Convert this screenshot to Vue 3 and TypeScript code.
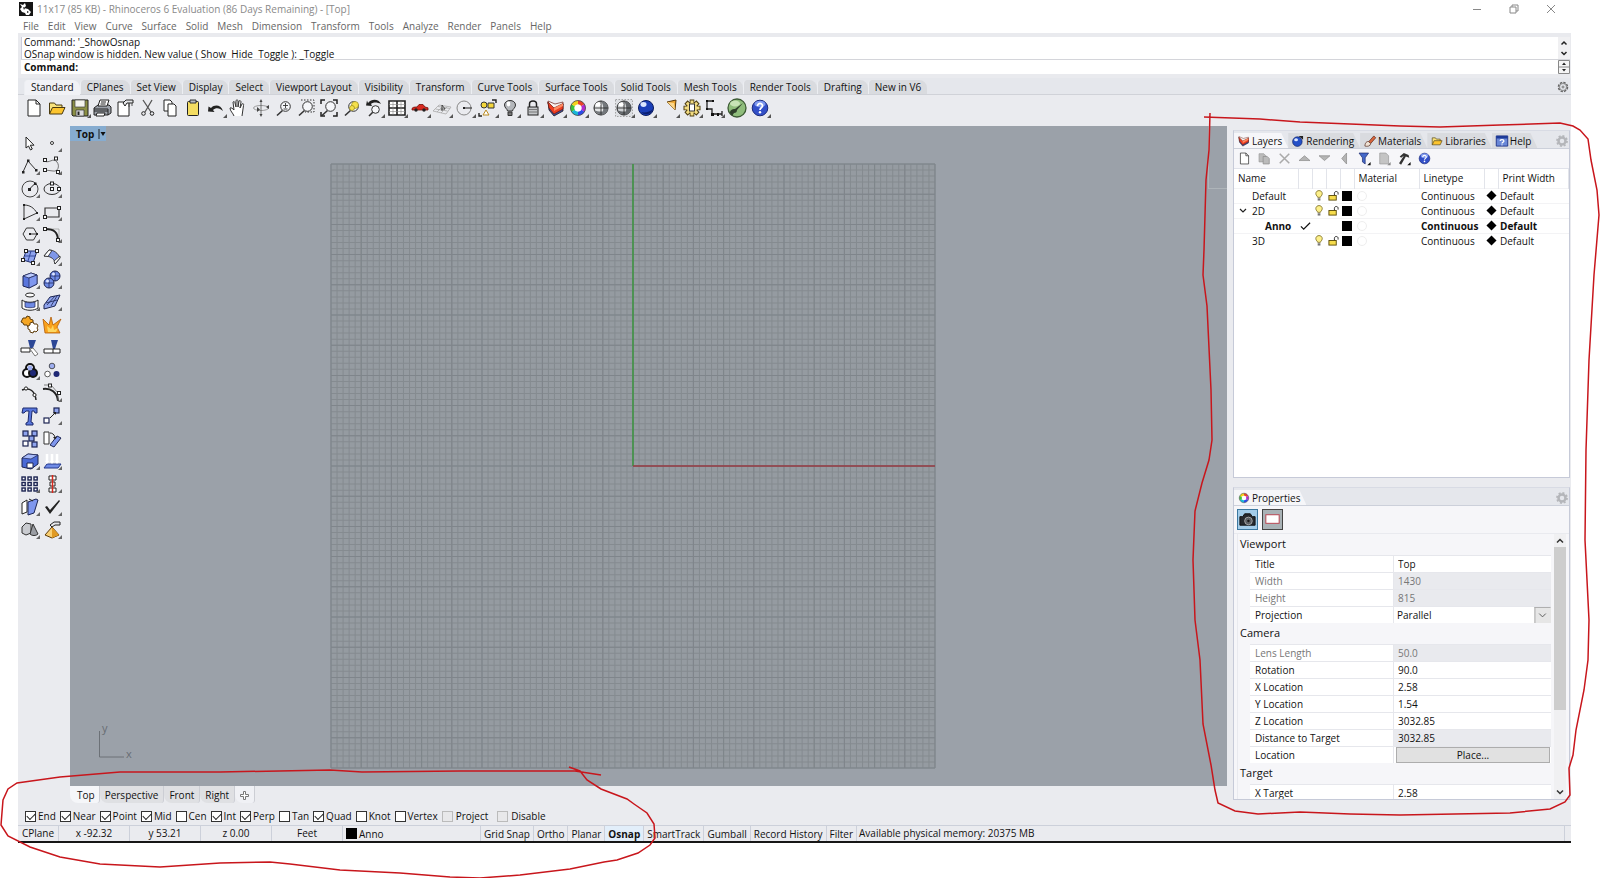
<script setup lang="ts">
import { ref } from 'vue'

interface Tool { name: string; art: string; more?: boolean }

const globe = (a: string, b: string) =>
  `<circle cx="11" cy="11" r="7" fill="${a}" stroke="#222"/><path d="M11 4a7 7 0 0 1 0 14c3-3 3-10 0-14z" fill="${b}"/><path d="M4.500 13a7 7 0 0 0 13 0c-3 2-10 2-13 0z" fill="${b}"/><path d="M4 11h14M11 4v14" stroke="#222" stroke-width=".8" fill="none"/><ellipse cx="8" cy="7.500" rx="2.500" ry="2" fill="#fff"/>`
const wheel =
  '<g fill="none" stroke-width="4"><path d="M11 5.500a5.500 5.500 0 0 1 4.800 2.800" stroke="#e8442c"/><path d="M15.800 8.300a5.500 5.500 0 0 1 0 5.400" stroke="#b22bd0"/><path d="M15.800 13.700a5.500 5.500 0 0 1-4.800 2.800" stroke="#2c4be8"/><path d="M11 16.500a5.500 5.500 0 0 1-4.800-2.800" stroke="#18b8d8"/><path d="M6.200 13.700a5.500 5.500 0 0 1 0-5.400" stroke="#3cc43c"/><path d="M6.200 8.300a5.500 5.500 0 0 1 4.800-2.800" stroke="#f2d21c"/></g><circle cx="11" cy="11" r="3.500" fill="#fff"/><circle cx="11" cy="11" r="7.500" fill="none" stroke="#444" stroke-width=".8"/>'
const layersArt =
  '<path d="M3 5l6 5 9-3v7l-9 5-5-6z" fill="#37509c" stroke="#26151c" stroke-width=".8"/><path d="M3 4l7 3 8-2v3l-9 4-6-5z" fill="#f7f2ee" stroke="#6b2018" stroke-width=".7"/><path d="M3 5l6 6 9-4.500v5.500l-9 5-5-6z" fill="#ee3f22" stroke="#6b140c" stroke-width=".7"/><path d="M9 11l9-4.500V9l-9 5z" fill="#ff8a60"/>'
const helpArt =
  '<circle cx="11" cy="11" r="7.800" fill="#3350c8" stroke="#1c2b7c"/><ellipse cx="11" cy="7" rx="5.500" ry="3.200" fill="#7f9af0"/><path d="M8.500 9c0-3.500 5.200-3.300 5 0-.2 1.900-2.500 1.800-2.500 4" fill="none" stroke="#fff" stroke-width="1.800"/><circle cx="11" cy="15.300" r="1.200" fill="#fff"/>'
const folderArt =
  '<path d="M3.500 17V6h5l1.500 2h6v3" fill="#f8e27c" stroke="#4a3a10"/><path d="M3.500 17l3-6.500h12.500L16 17z" fill="#fcc42e" stroke="#4a3a10"/>'
const pageArt = '<path d="M5 3h8l4 4v12H5z" fill="#fff" stroke="#222"/><path d="M13 3v4h4" fill="none" stroke="#222"/>'
const lens = '<path d="M9.500 13.500L4 18.500" stroke="#333" stroke-width="1.600"/><circle cx="12.500" cy="9.500" r="4.800" fill="#f6f7fa" stroke="#333"/>'
const gearArt =
  '<path d="M11 2.500v17M2.500 11h17M5 5l12 12M17 5L5 17" stroke="#4b3c10" stroke-width="4.600"/><path d="M11 3.500v15M3.500 11h15M5.800 5.800l10.400 10.400M16.200 5.800L5.800 16.200" stroke="#f3dc82" stroke-width="3"/><circle cx="11" cy="11" r="5" fill="#f3dc82"/><rect x="8.500" y="7" width="5" height="7" fill="#fff" stroke="#333"/>'

const toolbar: Tool[] = [
  { name: 'New', art: pageArt },
  { name: 'Open', art: folderArt },
  { name: 'Save', more: true, art: '<path d="M3 3h16v16H4l-1-1z" fill="#8b8f45" stroke="#222"/><path d="M6 3h10v7H6z" fill="#f4f4ee" stroke="#444" stroke-width=".7"/><path d="M7 13h8v6H7z" fill="#ddd" stroke="#333" stroke-width=".7"/><path d="M8.500 14.500h2v3.500h-2z" fill="#222"/>' },
  { name: 'Print', art: '<path d="M3 11l4-3h11l2 2v6l-3 2H3z" fill="#9ba0a8" stroke="#222"/><path d="M7 9l2-6h9l-2 6z" fill="#fff" stroke="#222"/><path d="M3 12h14v6M3 14h14M10 5h5M9.500 7h5" fill="none" stroke="#222"/><path d="M6 16h8l-1 3H5z" fill="#fff" stroke="#222"/>' },
  { name: 'Document properties', art: '<path d="M4 5h11v14H4z" fill="#fff" stroke="#222"/><path d="M9 6l3-3h7v3h-6l-2 3z" fill="#e6e7ea" stroke="#222"/><path d="M15 6v4M18 6v3" stroke="#555"/>' },
  { name: 'Cut', art: '<path d="M6 3l8 12M15 3L8 15" stroke="#555" stroke-width="1.300"/><circle cx="6.500" cy="16.500" r="1.800" fill="none" stroke="#222"/><circle cx="15" cy="16.500" r="1.800" fill="none" stroke="#222"/>' },
  { name: 'Copy', art: '<path d="M5 3h6l2 2v9H5z" fill="#fff" stroke="#222"/><path d="M9 7h6l2 2v10H9z" fill="#fff" stroke="#222"/>' },
  { name: 'Paste', art: '<rect x="5.500" y="4.500" width="11" height="14" rx="1" fill="#f4dd62" stroke="#222"/><path d="M8 3h6v3H8z" fill="#b9bcc2" stroke="#333"/>' },
  { name: 'Undo', more: true, art: '<path d="M6 11c4-4 10-3 12 3-3-3-7-4-10-1l1.500 2L3 14.500l.5-5z" fill="#222"/>' },
  { name: 'Pan', art: '<path d="M7 19c-1-3-4-5-4-8 1-1 3 1 4 2L6 5c1-1 2 0 2 1l1 4V3.500c1-1 2-.5 2 .5v6l1-6c1-1 2 0 2 1l-1 6 2-4c1-1 2 0 1.500 1.500L15 19" fill="#fff" stroke="#333"/>' },
  { name: 'Rotate view', art: '<ellipse cx="11" cy="11" rx="7.500" ry="2.500" fill="none" stroke="#888" stroke-width=".8"/><path d="M11 4v14" stroke="#555" stroke-width=".8"/><path d="M11 2l1.500 3h-3zM11 20l1.500-3h-3zM7 10l3 2.500-3 2.500zM19 8l-3 2 3 2z" fill="#444"/>' },
  { name: 'Zoom dynamic', art: lens + '<path d="M10 8.500h5M12.500 6v5M10.500 12h4" stroke="#333" stroke-width=".9"/>' },
  { name: 'Zoom window', art: '<path d="M6 3h13v12H10" fill="none" stroke="#333" stroke-dasharray="1.500 1.500"/>' + lens },
  { name: 'Zoom extents', art: lens + '<path d="M3 7V3h4M15 3h4v4M3 15v4h4M15 19h4v-4" fill="none" stroke="#222" stroke-width="1.500"/>' },
  { name: 'Zoom selected', art: lens + '<circle cx="14" cy="8" r="3.500" fill="#f5e04c" stroke="#887a10" stroke-width=".6"/><circle cx="11" cy="11" r="2.500" fill="#f5e04c" stroke="#887a10" stroke-width=".6"/>' },
  { name: 'Undo view change', more: true, art: '<path d="M10 15l-4 4" stroke="#333" stroke-width="1.600"/><circle cx="12.500" cy="12.500" r="3.800" fill="#f6f7fa" stroke="#333"/><path d="M5 6c4-5 11-4 13 1-4-2-8-2-10 0l1 2-6-.5 1-5z" fill="#222"/>' },
  { name: 'Four viewports', more: true, art: '<path d="M3 4h16v14H3z" fill="#fff" stroke="#222" stroke-width="1.600"/><path d="M11 4v14M3 11h16" stroke="#222" stroke-width="1.600"/><path d="M7 4v14M15 4v14M3 7.500h16M3 14.500h16" stroke="#888" stroke-width=".6"/>' },
  { name: 'Named view', more: true, art: '<path d="M3 12c0-2 3-2 5-2l2-2.500h4l2 2.500 3 .8V13H3z" fill="#d82a20" stroke="#70120c" stroke-width=".8"/><circle cx="7" cy="13" r="1.700" fill="#222"/><circle cx="15" cy="13" r="1.700" fill="#222"/>' },
  { name: 'Set CPlane', more: true, art: '<path d="M2 14l6-6 12 2-5 7zM4.500 12l12 2M7 9.500l12 2M6 15l6-6M10 16l6-6" fill="none" stroke="#aaa" stroke-width=".8"/><path d="M11 14V8l3 4h-4" fill="none" stroke="#333" stroke-width=".8"/>' },
  { name: 'Object snap', more: true, art: '<circle cx="10" cy="11" r="7" fill="none" stroke="#888"/><path d="M10 11h8" stroke="#222"/><path d="M9 10h2v2H9z" fill="#222"/>' },
  { name: 'Select objects', more: true, art: '<circle cx="7" cy="8" r="3" fill="#f3d63c" stroke="#333"/><path d="M11 6h6v5h-6z" fill="#f3d63c" stroke="#333"/><path d="M9 13l3 5H6z" fill="#fff" stroke="#b98a20"/><path d="M15 3h4v3M2 16v3h3" fill="none" stroke="#222" stroke-width="1.400"/>' },
  { name: 'Hide objects', more: true, art: '<path d="M8.500 14c0-2-3-3-3-6 0-6 11-6 11 0 0 3-3 4-3 6z" fill="#b4b7bb" stroke="#333"/><ellipse cx="9.500" cy="7" rx="1.800" ry="2.400" fill="#fff"/><path d="M9 15h4v3.500H9z" fill="#777" stroke="#333"/>' },
  { name: 'Lock objects', more: true, art: '<path d="M7.500 10V7c0-4 7-4 7 0v3" fill="none" stroke="#222" stroke-width="1.500"/><rect x="6" y="10" width="10" height="8" fill="#c4c6c9" stroke="#222"/><path d="M7 12.500h8M7 15h8" stroke="#666" stroke-width=".8"/>' },
  { name: 'Edit layers', more: true, art: layersArt },
  { name: 'Object properties', more: true, art: wheel },
  { name: 'Shade', art: globe('#e3e5e6', '#74787c') },
  { name: 'Shade selected', more: true, art: '<path d="M2.500 2.500h17v17h-17z" fill="#dddfe3" stroke="#888" stroke-width=".7" stroke-dasharray="1.500 1.500"/>' + globe('#cdd0d3', '#62666a') },
  { name: 'Render', more: true, art: '<circle cx="11" cy="11" r="7.500" fill="#1b3fb8" stroke="#0c1c5c"/><path d="M6 15a7 7 0 0 0 12-3c-3 3-8 4-12 3z" fill="#0b1f70"/><ellipse cx="8.500" cy="7.500" rx="3" ry="2.400" fill="#dbe6ff"/>' },
  { name: 'Spotlight', more: true, art: '<path d="M9 5l9-2-1 10z" fill="#f1a832" stroke="#5b3a08"/><path d="M9 5l8 8-1-7z" fill="#fbd68a"/>' },
  { name: 'Options', more: true, art: gearArt },
  { name: 'Dimension', more: true, art: '<path d="M4 4v8h5v6M9 17h10M19 14v5M4 4h6" fill="none" stroke="#222" stroke-width="1.300"/><path d="M3 3h2v2H3zM9 3h2v2H9zM3 11h2v2H3zM8 16h3v3H8zM14 16h2v3h-2z" fill="#111"/>' },
  { name: 'Grasshopper', art: '<circle cx="11" cy="11" r="9" fill="#8fbd7c" stroke="#3c5a34" stroke-width="1.300"/><ellipse cx="9" cy="6.500" rx="5" ry="3" fill="#c7e3b6"/><path d="M4 16c0-3 2-4 5-4l8-6-6 7c0 2-1 3-3 3l-2 3z" fill="#2f402c"/>' },
  { name: 'Help topics', more: true, art: helpArt },
]

const dot = (x: number, y: number) => `<rect x="${x - 1.5}" y="${y - 1.5}" width="3" height="3" fill="#fff" stroke="#222"/>`
const box = (x: number, y: number, f = '#8fa4ee') => `<rect x="${x}" y="${y}" width="5" height="5" fill="${f}" stroke="#1c2452" stroke-width="1.200"/>`

const sideTools: Tool[] = [
  { name: 'Select', art: '<path d="M7 5v11l2.500-2 2 4 1.800-1-2-3.800H15z" fill="#fff" stroke="#222"/>' },
  { name: 'Point', more: true, art: '<circle cx="11" cy="11" r="1.500" fill="#fff" stroke="#333"/>' },
  { name: 'Polyline', more: true, art: '<path d="M4 17L9 6l8 9" fill="none" stroke="#333"/><path d="M3 16h2.500v2.500H3zM8 4.500h2.500V7H8zM16 14h2.500v2.500H16z" fill="#222"/>' },
  { name: 'Curve', more: true, art: '<path d="M4 6c4 3 8-4 12 1 3 4 1 10-4 9l-8-1" fill="none" stroke="#555" stroke-width=".8"/>' + dot(4, 5) + dot(15, 3.5) + dot(4, 15) + dot(17, 17) },
  { name: 'Circle', more: true, art: '<circle cx="11" cy="11" r="8" fill="none" stroke="#444"/><path d="M10.500 11l5-5" stroke="#222"/><path d="M9 10h3v3H9zM15 4.500h2.500V7H15z" fill="#222"/>' },
  { name: 'Ellipse', more: true, art: '<ellipse cx="11" cy="11" rx="8" ry="5.500" fill="none" stroke="#333"/>' + dot(11, 11) + dot(11, 5.5) + dot(18, 11) },
  { name: 'Arc', more: true, art: '<path d="M5 18V4c6 0 10 3 13 8z" fill="none" stroke="#333"/><path d="M4 3h2v2H4zM4 17h2v2H4zM17 11h2v2h-2z" fill="#222"/>' },
  { name: 'Rectangle', more: true, art: '<path d="M4 7h14v9H4z" fill="none" stroke="#333" stroke-width="1.200"/>' + dot(4, 16) + dot(18, 7) },
  { name: 'Polygon', more: true, art: '<path d="M4 11l3.500-6h7l3.500 6-3.500 6h-7z" fill="none" stroke="#333"/><path d="M11 11h7" stroke="#333"/><path d="M10 10h2v2h-2zM17 10h2v2h-2z" fill="#222"/>' },
  { name: 'Fillet', more: true, art: '<path d="M4 6h14v12" fill="none" stroke="#999" stroke-width=".7"/><path d="M4 6c9 0 13 3 13 12" fill="none" stroke="#222" stroke-width="2"/>' + dot(4, 6) + dot(17, 17) },
  { name: 'Surface from points', more: true, art: '<path d="M7 5h11l-4 12-10-3z" fill="#8fa4ee" stroke="#1c2a6c"/><path d="M12 5L9 15M6 10h10" stroke="#33489c"/>' + dot(7, 5) + dot(18, 5) + dot(4, 14) + dot(14, 17) },
  { name: 'Loft', more: true, art: '<path d="M3 10l5-6c5 0 9 3 11 8l-5 6c0-4-3-8-11-8z" fill="#7f97e8" stroke="#222" stroke-width=".8"/><path d="M3 10l5-6 3 .5-4 6zM14 18l5-6 0-2-6 5z" fill="#fff" stroke="#222" stroke-width=".8"/>' },
  { name: 'Box', more: true, art: '<path d="M4 7l8-3 6 2v9l-8 4-6-2z" fill="#5a76dd" stroke="#1c2452"/><path d="M4 7l6 2 8-3-6-2z" fill="#bccbff" stroke="#1c2452" stroke-width=".7"/><path d="M10 9v10l8-4V6z" fill="#7f97ee" stroke="#1c2452" stroke-width=".7"/>' },
  { name: 'Sphere', more: true, art: '<circle cx="14" cy="7" r="5" fill="#6f8be6" stroke="#1c2452"/><circle cx="8" cy="14" r="5" fill="#6f8be6" stroke="#1c2452"/><path d="M9 7h10M14 2v10M3 14h10M8 9v10" stroke="#1c2452" stroke-width=".7"/><circle cx="12.500" cy="5" r="1.500" fill="#dce4ff"/><circle cx="6.500" cy="12" r="1.500" fill="#dce4ff"/>' },
  { name: 'Cylinder', more: true, art: '<ellipse cx="11" cy="4" rx="4.500" ry="2" fill="#fff" stroke="#222"/><path d="M3 9c4 3 12 3 16 0v8c-4 3-12 3-16 0z" fill="#fff" stroke="#222"/><path d="M6 11c3 1 7 1 10 0v5c-3 1-7 1-10 0z" fill="#6f8be6" stroke="#1c2452" stroke-width=".7"/>' },
  { name: 'Mesh plane', more: true, art: '<path d="M3 14l6-8 10-2-5 11-11 3z" fill="#8fa4ee" stroke="#1c2452"/><path d="M6 14l8-9M10 15l6-10M5 12l11-3" stroke="#1c2452" stroke-width=".8"/>' },
  { name: 'Boolean union', art: '<path d="M4 4h3l1-2 3 1v2l3 1v3l-2 1v2l-3 1-1-2H5l-1-2-2-1 1-2z" fill="#f5a623" stroke="#5c3a08"/><path d="M11 9l3-1 1 2h3l1 2-1 2 1 2-2 2-2-1-1 2-3-1v-2l-2-1v-3l2-1z" fill="#fff" stroke="#5c3a08"/>' },
  { name: 'Explode', art: '<path d="M4 19L2 5l6 6 2-8 2 8 8-6-4 8 3 6z" fill="#f9a11c" stroke="#b15c06" stroke-width=".8"/><path d="M7 18l-1-6 4 3 2-4 1 5 4-2-2 4z" fill="#fdd760"/>' },
  { name: 'Trim', art: '<path d="M9 3h8l-3 8h-3z" fill="#2c4796"/><path d="M2 11h9v4H2z" fill="#fff" stroke="#222"/><path d="M11 12l3-1 5 6-3 2z" fill="#fff" stroke="#777"/>' },
  { name: 'Split', art: '<path d="M10 3h7l-3 9h-2z" fill="#2c4796"/><path d="M3 12h16v4H3zM12 12v4" fill="#fff" stroke="#222"/>' },
  { name: 'Group', more: true, art: '<circle cx="11" cy="8" r="4" fill="#fff" stroke="#111" stroke-width="2"/><circle cx="8" cy="13" r="4" fill="#fff" stroke="#111" stroke-width="2"/><circle cx="14" cy="13" r="4" fill="#1f2875" stroke="#111" stroke-width="2"/><circle cx="11" cy="8" r="2.500" fill="#9eaef0"/>' },
  { name: 'Ungroup', art: '<circle cx="11" cy="6" r="2.800" fill="#9eaef0" stroke="#333" stroke-width=".8"/><circle cx="6.500" cy="14" r="2.800" fill="#fff" stroke="#333" stroke-width=".8"/><circle cx="15.500" cy="14" r="3" fill="#1f2875"/>' },
  { name: 'Edit points', art: '<path d="M3 8c8-3 13 1 14 10" fill="none" stroke="#222" stroke-width="1.500"/><circle cx="7" cy="6.500" r="1.600" fill="#fff" stroke="#222"/><circle cx="15.500" cy="13" r="1.600" fill="#fff" stroke="#222"/>' },
  { name: 'Control points', more: true, art: '<path d="M2 7c8-1 14 3 15 12" fill="none" stroke="#222" stroke-width="2"/><path d="M3 3h7l7 8v8" fill="none" stroke="#666" stroke-width=".8"/>' + dot(9, 3.5) + dot(18, 11) },
  { name: 'Text', art: '<path d="M4 3h14v5h-2l-1-2h-2l-1 11 2 1v2H7v-2l2-1 1-11H7L5 8H3z" fill="#5876dc" stroke="#1c2a6c"/>' },
  { name: 'Move', more: true, art: box(13, 3) + box(3, 13, '#fff') + '<path d="M9 13l5-5" stroke="#222"/><path d="M15 7v3l-3-3z" fill="#222"/>' },
  { name: 'Copy objects', art: box(4, 3) + box(13, 3) + box(10, 8) + box(4, 13, '#fff') + box(13, 14) },
  { name: 'Rotate', art: '<path d="M3 4h5v12H3z" fill="#fff" stroke="#333"/><path d="M16 8l4 2-7 9-4-2z" fill="#7f97ee" stroke="#1c2452"/><path d="M9 5c2 0 4 1 5 4" fill="none" stroke="#222"/><path d="M12 9h4l-2 2.500z" fill="#222"/>' },
  { name: 'Solid edit', more: true, art: '<path d="M3 8l6-4 10 1v9l-7 5-9-2z" fill="#4a6ad6" stroke="#1c2452"/><path d="M3 8l6-4 10 1-7 4z" fill="#a9bcfa" stroke="#1c2452" stroke-width=".7"/><path d="M8 18v-5h6v5z" fill="#fff" stroke="#1c2452"/>' },
  { name: 'Project', more: true, art: '<path d="M3 18l3-4h14l-3 4z" fill="#6f8be6" stroke="#24388c"/><path d="M6 4v8M11 4v8M16 4v8" stroke="#fff" stroke-width="2.500"/><path d="M4 11h4l-2 3zM9 11h4l-2 3zM14 11h4l-2 3z" fill="#fff"/>' },
  { name: 'Array', more: true, art: [3, 9, 15].map(x => [4, 9.5, 15].map(y => `<rect x="${x}" y="${y}" width="3.200" height="3" fill="#fff" stroke="#1c2452" stroke-width="1.400"/>`).join('')).join('') },
  { name: 'Align', more: true, art: '<path d="M8 3h7v4H8zM9 9h5v4H9zM8 15h7v4H8z" fill="#fff" stroke="#222"/><path d="M11.500 2v18" stroke="#d8281c" stroke-width="1.500"/>' },
  { name: 'Scale', more: true, art: '<path d="M3 7l5-3v12l-5 2z" fill="#fff" stroke="#222"/><path d="M9 6l8-3 2 1-4 13-6 2z" fill="#7f97ee" stroke="#1c2452"/><path d="M10 3l4 2" stroke="#222"/>' },
  { name: 'Check', more: true, art: '<path d="M4 11l2-1 3 4 9-10 1 1L9 18z" fill="#222"/>' },
  { name: 'Primitives', more: true, art: '<path d="M3 8l4-4 5 1v9l-5 2-4-2z" fill="#c9cbd0" stroke="#333"/><path d="M14 5l5 10c-2 2-6 2-8 0z" fill="#9a9da3" stroke="#333"/>' },
  { name: 'Pyramid tools', more: true, art: '<path d="M4 16l7-8 7 8-7 3z" fill="#f9cf72" stroke="#5c3a08"/><path d="M11 8v11l7-3z" fill="#e09a24"/><path d="M9 6l4-3h6v3h-5l-3 2z" fill="#e6e7ea" stroke="#222"/>' },
]

const menus = ['File', 'Edit', 'View', 'Curve', 'Surface', 'Solid', 'Mesh', 'Dimension', 'Transform', 'Tools', 'Analyze', 'Render', 'Panels', 'Help']
const tabs = ['Standard', 'CPlanes', 'Set View', 'Display', 'Select', 'Viewport Layout', 'Visibility', 'Transform', 'Curve Tools', 'Surface Tools', 'Solid Tools', 'Mesh Tools', 'Render Tools', 'Drafting', 'New in V6']
const activeTab = ref('Standard')

const panelTabs = [
  { name: 'Layers', art: layersArt },
  { name: 'Rendering', art: '<circle cx="10" cy="12" r="7.500" fill="#2450c8" stroke="#0c1c5c"/><ellipse cx="8" cy="9" rx="3" ry="2.500" fill="#dbe6ff"/><path d="M12 3h7v6z" fill="#222"/>' },
  { name: 'Materials', art: '<path d="M9 12l8-9 3 3-8 9z" fill="#d8643c" stroke="#4a1c0c"/><path d="M3 19c0-5 3-8 6-7l3 3c0 4-5 5-9 4z" fill="#f0e2d4" stroke="#4a1c0c"/>' },
  { name: 'Libraries', art: folderArt },
  { name: 'Help', art: '<path d="M2 3h18v16H2z" fill="#6a88d8" stroke="#24388c" stroke-width="1.500"/><path d="M2 3h18v4H2z" fill="#1c3a98"/><path d="M8 11c0-3 6-3 6 0 0 2-3 2-3 4" fill="none" stroke="#fff" stroke-width="2"/><circle cx="11" cy="17" r="1" fill="#fff"/>' },
]
const layerTools: Tool[] = [
  { name: 'New layer', art: pageArt },
  { name: 'New sublayer', art: '<path d="M3 4h7l3 3v9H3z" fill="#bbb" stroke="#999"/><path d="M9 8h6l3 3v8H9z" fill="#bbb" stroke="#888"/>' },
  { name: 'Delete layer', art: '<path d="M4 4l14 14M18 4L4 18" stroke="#aaa" stroke-width="2.200"/>' },
  { name: 'Move up', art: '<path d="M3 14l8-7 8 7z" fill="#b4b4b4" stroke="#888"/>' },
  { name: 'Move down', art: '<path d="M3 7l8 7 8-7z" fill="#b4b4b4" stroke="#888"/>' },
  { name: 'Move left', art: '<path d="M14 3l-7 8 7 8z" fill="#b4b4b4" stroke="#888"/>' },
  { name: 'Filter', art: '<path d="M3 3h14l-5 7v9l-4-3v-6z" fill="#4468c8" stroke="#1c2a6c"/><path d="M20 16v5h-5z" fill="#111"/>' },
  { name: 'Columns', art: '<path d="M4 3h9l4 4v12H4z" fill="#c4c4c4" stroke="#999"/><path d="M20 16v5h-5z" fill="#888"/>' },
  { name: 'Layer tools', art: '<path d="M4 8l6-5 7 3 1 4-5-2L6 20l-3-2 7-11-4 3z" fill="#333"/><path d="M20 16v5h-5z" fill="#111"/>' },
  { name: 'Layer help', art: helpArt },
]
const layers = [
  { name: 'Default', level: 0, open: false, current: false },
  { name: '2D', level: 0, open: true, current: false },
  { name: 'Anno', level: 1, open: false, current: true },
  { name: '3D', level: 0, open: false, current: false },
]

interface Field { label: string; value: string; kind?: 'dim' | 'shade' | 'select' | 'button' }
const sections: { title: string; fields: Field[] }[] = [
  { title: 'Viewport', fields: [
    { label: 'Title', value: 'Top' },
    { label: 'Width', value: '1430', kind: 'dim' },
    { label: 'Height', value: '815', kind: 'dim' },
    { label: 'Projection', value: 'Parallel', kind: 'select' },
  ] },
  { title: 'Camera', fields: [
    { label: 'Lens Length', value: '50.0', kind: 'dim' },
    { label: 'Rotation', value: '90.0' },
    { label: 'X Location', value: '2.58' },
    { label: 'Y Location', value: '1.54' },
    { label: 'Z Location', value: '3032.85' },
    { label: 'Distance to Target', value: '3032.85', kind: 'shade' },
    { label: 'Location', value: 'Place...', kind: 'button' },
  ] },
  { title: 'Target', fields: [{ label: 'X Target', value: '2.58' }] },
]

const viewTabs = ['Top', 'Perspective', 'Front', 'Right']
const snaps = ref([
  { name: 'End', on: true }, { name: 'Near', on: true }, { name: 'Point', on: true }, { name: 'Mid', on: true },
  { name: 'Cen', on: false }, { name: 'Int', on: true }, { name: 'Perp', on: true }, { name: 'Tan', on: false },
  { name: 'Quad', on: true }, { name: 'Knot', on: false }, { name: 'Vertex', on: false },
  { name: 'Project', on: false, soft: true }, { name: 'Disable', on: false, soft: true },
])
const modes = ['Grid Snap', 'Ortho', 'Planar', 'Osnap', 'SmartTrack', 'Gumball', 'Record History', 'Filter']

const gridLines = Array.from({ length: 101 }, (_, i) => i * 6)
const minor = gridLines.map(p => `M${p} 0V600M0 ${p}H600`).join('')
const major = gridLines.filter((_, i) => i % 5 === 0).map(p => `M${p} 0V600M0 ${p}H600`).join('')
</script>

<template>
  <div class="window">
    <header class="titlebar">
      <svg class="logo" viewBox="0 0 14 14" aria-hidden="true">
        <rect width="14" height="14" fill="#151515" />
        <path d="M1 2l3 1 2-2 1 3-2 2 4 1 3 3-2 3H7l-1-2-3-1-2-3 2-2z" fill="#fff" />
        <path d="M4 5l2 1-1 2zM8 9l2 1-2 1z" fill="#151515" />
      </svg>
      <span class="caption">11x17 (85 KB) - Rhinoceros 6 Evaluation (86 Days Remaining) - [Top]</span>
      <button class="win" aria-label="Minimize"><svg viewBox="0 0 10 10"><path d="M1 5.500h8" /></svg></button>
      <button class="win" aria-label="Restore"><svg viewBox="0 0 10 10"><path d="M1 3h6v6H1zM3 3V1h6v6H7" /></svg></button>
      <button class="win" aria-label="Close"><svg viewBox="0 0 10 10"><path d="M1 1l8 8M9 1L1 9" /></svg></button>
    </header>

    <nav class="menubar">
      <button v-for="m in menus" :key="m">{{ m }}</button>
    </nav>

    <section class="command">
      <div class="history">
        <div class="log">
          <div>Command: '_ShowOsnap</div>
          <div>OSnap window is hidden. New value ( Show&nbsp; Hide&nbsp; Toggle ): _Toggle</div>
        </div>
        <div class="arrows">
          <svg viewBox="0 0 12 22"><path d="M3.500 7.500L6 5l2.500 2.500M3.500 15L6 17.500 8.500 15" fill="none" stroke="#222" stroke-width="1.500" /></svg>
        </div>
      </div>
      <div class="prompt">
        <label for="cmd">Command:</label>
        <input id="cmd" type="text" />
        <svg class="spin" viewBox="0 0 12 14"><path d="M.5.500h11v13H.500zM.500 7h11" fill="#f5f5f5" stroke="#888" /><path d="M4 5l2-2.500L8 5zM4 9l2 2.500L8 9z" fill="#222" /></svg>
      </div>
    </section>

    <div class="tabstrip">
      <button v-for="t in tabs" :key="t" class="tab" :class="{ on: t === activeTab }" @click="activeTab = t">{{ t }}</button>
      <svg class="gear" viewBox="0 0 12 12"><circle cx="6" cy="6" r="4.500" fill="none" stroke="#666" stroke-width="1.500" stroke-dasharray="2.400 1.100" /><circle cx="6" cy="6" r="3.500" fill="none" stroke="#777" stroke-width=".8" /><circle cx="6" cy="6" r="1" fill="none" stroke="#777" /></svg>
    </div>

    <div class="toolrow">
      <div class="toolbar">
        <button v-for="t in toolbar" :key="t.name" class="tool" :aria-label="t.name">
          <svg viewBox="0 0 22 22"><g fill="none" v-html="t.art" /><path v-if="t.more" d="M22 17v4h-4z" fill="#555" /></svg>
        </button>
      </div>
    </div>

    <div class="body">
      <aside class="side">
        <button v-for="t in sideTools" :key="t.name" class="tool" :aria-label="t.name">
          <svg viewBox="0 0 22 22"><g fill="none" v-html="t.art" /><path v-if="t.more" d="M21 16v4h-4z" fill="#666" /></svg>
        </button>
      </aside>

      <main class="center">
        <div class="viewport">
          <button class="viewname">Top <svg viewBox="0 0 8 10"><path d="M1 0v10" stroke="#222" /><path d="M2.500 3h5L5 7z" fill="#111" /></svg></button>
          <svg class="grid" viewBox="0 0 600 600">
            <rect width="600" height="600" fill="#959ba1" />
            <path :d="minor" stroke="#858b90" stroke-width="1" />
            <path :d="major" stroke="#7f858b" stroke-width="1" />
            <path d="M300 0v300" stroke="#3c9440" stroke-width="1.500" />
            <path d="M300 300h300" stroke="#963a42" stroke-width="1.500" />
          </svg>
          <svg class="axes" viewBox="0 0 36 40"><path d="M1.500 9v26H26" fill="none" stroke="#6c7177" /><text x="4" y="10">y</text><text x="28" y="36">x</text></svg>
          <div class="corner"></div>
        </div>
        <div class="viewtabs">
          <button v-for="(v, i) in viewTabs" :key="v" :class="{ on: i === 0 }">{{ v }}</button>
          <button class="add" aria-label="New viewport"><svg viewBox="0 0 9 9"><path d="M3.500.500h2v3h3v2h-3v3h-2v-3h-3v-2h3z" fill="#fff" stroke="#777" /></svg></button>
        </div>
      </main>

      <aside class="panels">
        <section class="panel layers">
          <div class="ptabs">
            <button v-for="(p, i) in panelTabs" :key="p.name" :class="{ on: i === 0 }">
              <svg viewBox="0 0 22 22"><g fill="none" v-html="p.art" /></svg>{{ p.name }}
            </button>
            <svg class="pgear" viewBox="0 0 12 12"><circle cx="6" cy="6" r="3.500" fill="none" stroke="#b4b6ba" stroke-width="2.500" /><circle cx="6" cy="6" r="5" fill="none" stroke="#b4b6ba" stroke-width="1.800" stroke-dasharray="2 1.900" /></svg>
          </div>
          <div class="ltools">
            <button v-for="t in layerTools" :key="t.name" :aria-label="t.name"><svg viewBox="0 0 22 22"><g fill="none" v-html="t.art" /></svg></button>
          </div>
          <table>
            <colgroup><col class="w-name" /><col class="w-i" /><col class="w-i" /><col class="w-i" /><col class="w-i" /><col class="w-m" /><col class="w-m" /><col class="w-i" /><col /></colgroup>
            <thead>
              <tr><th>Name</th><th></th><th></th><th></th><th></th><th>Material</th><th>Linetype</th><th></th><th>Print Width</th></tr>
            </thead>
            <tbody>
              <tr v-for="l in layers" :key="l.name" :class="{ cur: l.current }">
                <td class="lname" :class="{ sub: l.level }"><svg v-if="l.open" class="chev" viewBox="0 0 8 8"><path d="M1 2l3 3 3-3" fill="none" stroke="#222" stroke-width="1.200" /></svg>{{ l.name }}</td>
                <td><svg v-if="l.current" viewBox="0 0 12 12"><path d="M1 7l3 3 7-7" fill="none" stroke="#111" stroke-width="1.300" /></svg></td>
                <td><svg v-if="!l.current" viewBox="0 0 12 12"><path d="M4 8C4 7 2 6 2 4c0-4.500 7-4.500 7 0 0 2-2 3-2 4z" fill="#fdf08a" stroke="#6b5a10" stroke-width=".8" /><path d="M4 9h3v2.500H4z" fill="#777" /></svg></td>
                <td><svg v-if="!l.current" viewBox="0 0 12 12"><path d="M7 6V3.500c0-2.500 4-2.500 4 0V5" fill="none" stroke="#222" /><rect x="1" y="6" width="8" height="5" fill="#f6dc4c" stroke="#5a4a08" /></svg></td>
                <td><span class="swatch"></span></td>
                <td><span class="ring"></span></td>
                <td>Continuous</td>
                <td><svg viewBox="0 0 12 12"><path d="M6 .500L11.500 6 6 11.500.500 6z" fill="#000" /></svg></td>
                <td>Default</td>
              </tr>
            </tbody>
          </table>
        </section>

        <section class="panel props">
          <div class="ptabs">
            <button class="on"><svg viewBox="0 0 22 22"><g fill="none" v-html="wheel" /></svg>Properties</button>
            <svg class="pgear" viewBox="0 0 12 12"><circle cx="6" cy="6" r="3.500" fill="none" stroke="#b4b6ba" stroke-width="2.500" /><circle cx="6" cy="6" r="5" fill="none" stroke="#b4b6ba" stroke-width="1.800" stroke-dasharray="2 1.900" /></svg>
          </div>
          <div class="modes">
            <button class="sel" aria-label="Viewport properties"><svg viewBox="0 0 20 20"><path d="M2 7h3l2-3h6l2 3h3v9H2z" fill="#26292e" stroke="#111" /><circle cx="11" cy="11.500" r="4" fill="#555a60" stroke="#aaa" /><circle cx="11" cy="11.500" r="1.800" fill="#17181a" stroke="#888" stroke-width=".6" /></svg></button>
            <button aria-label="Detail properties"><svg viewBox="0 0 20 20"><rect x="3" y="5" width="14" height="9" fill="#fff" stroke="#b8404c" /></svg></button>
          </div>
          <div class="scroll">
            <div class="fields">
              <template v-for="s in sections" :key="s.title">
                <h2>{{ s.title }}</h2>
                <div v-for="f in s.fields" :key="f.label" class="field" :class="f.kind">
                  <label :for="f.label">{{ f.label }}</label>
                  <button v-if="f.kind === 'button'" :id="f.label" class="place">{{ f.value }}</button>
                  <span v-else-if="f.kind === 'select'" class="pick">
                    <select :id="f.label"><option>{{ f.value }}</option></select>
                    <svg viewBox="0 0 17 17"><path d="M.500 0v17M0 .500h17" stroke="#aaa" /><path d="M5 7l3.500 3.500L12 7" fill="none" stroke="#555" /></svg>
                  </span>
                  <input v-else :id="f.label" type="text" :value="f.value" :readonly="!!f.kind" />
                </div>
              </template>
            </div>
            <div class="bar">
              <svg viewBox="0 0 12 12"><path d="M3 8l3-3 3 3" fill="none" stroke="#333" stroke-width="1.500" /></svg>
              <div class="thumb"></div>
              <svg viewBox="0 0 12 12"><path d="M3 4l3 3 3-3" fill="none" stroke="#333" stroke-width="1.500" /></svg>
            </div>
          </div>
        </section>
      </aside>
    </div>

    <div class="osnap">
      <label v-for="s in snaps" :key="s.name" :class="{ soft: s.soft }"><input v-model="s.on" type="checkbox" />{{ s.name }}</label>
    </div>

    <footer class="status">
      <span class="cp">CPlane</span><span class="co">x -92.32</span><span class="co">y 53.21</span><span class="co">z 0.00</span><span class="co">Feet</span>
      <span class="layer"><i></i>Anno</span>
      <button v-for="m in modes" :key="m" :class="{ on: m === 'Osnap' }">{{ m }}</button>
      <span class="mem">Available physical memory: 20375 MB</span>
    </footer>

    <svg class="ink" viewBox="0 0 1600 878" aria-hidden="true">
      <path d="M1204 117L1260 119L1300 122L1400 126L1440 127L1500 125L1560 123L1573 126L1580 130L1588 139L1591 160L1597 190L1599 215L1594 275L1589 360L1586 450L1585 540L1589 620L1588 660L1584 690L1576 730L1573 755L1569 768L1570 795L1565 802L1550 809L1510 813L1400 815L1350 814L1300 812L1258 814L1235 811L1218 803L1215 790L1211 765L1203 724L1200 660L1195 620L1193 560L1195 511L1202 483L1209 460L1212 440L1211 390L1207 306L1203 275L1204 250L1206 180L1209 150L1210 113" />
      <path d="M569 767L580 771L587 780L601 789L627 799L634 804L647 813L654 824L655 838L650 845L638 853L617 860L604 862L570 869L520 875L480 878L450 877L400 873L340 870L290 864L270 862L220 863L160 867L100 864L60 857L30 847L8 836L1 825L3 800L8 789L17 783L60 777L120 772L220 772L330 770L362 772L460 771L510 771L575 771L601 775" />
    </svg>
  </div>
</template>

<style>
html, body { background: #fff; }
</style>

<style scoped>
.window {
  position: relative;
  display: flex;
  flex-direction: column;
  box-sizing: border-box;
  height: 100vh;
  min-height: 640px;
  padding: 0 29px 35px 18px;
  overflow: hidden;
  font: 10px/12px "Open Sans", "Noto Sans", sans-serif;
  color: #111;
}
.window * { box-sizing: border-box; }
button, input, select { font: inherit; color: inherit; margin: 0; padding: 0; border: 0; background: none; border-radius: 0; outline: 0; }
svg { display: block; flex: none; }

.titlebar { display: flex; align-items: center; height: 18px; padding-right: 2px; color: #8a8a8a; }
.logo { width: 14px; height: 14px; margin: 0 4px 0 1px; }
.caption { flex: 1; }
.win { width: 37px; display: flex; justify-content: center; }
.win svg { width: 10px; height: 10px; fill: none; stroke: #888; }
.menubar { display: flex; gap: 9px; height: 15px; padding-left: 5px; color: #666; }

.command { background: #e9eaee; padding: 4px 1px 4px 3px; }
.history { display: flex; height: 22px; background: #fff; border-left: 1px solid #ccd; }
.log { flex: 1; padding-left: 2px; line-height: 12px; white-space: nowrap; margin-top: -1px; }
.arrows { width: 12px; background: #f0f0f2; }
.arrows svg { width: 12px; height: 22px; }
.prompt { display: flex; align-items: center; height: 15px; border-top: 1px solid #d4d5da; background: #fff; padding-left: 3px; font-weight: 700; }
.prompt input { flex: 1; min-width: 0; height: 14px; }
.spin { width: 12px; height: 14px; }

.tabstrip { display: flex; align-items: flex-end; height: 17px; padding: 2px 2px 0 6px; background: #e5e7ec; border-bottom: 1px solid #d0d2d8; }
.tab { height: 14px; padding: 0 6px; background: #d9dbdf; border-radius: 4px 8px 0 0; border-left: 1px solid #eceef2; white-space: nowrap; line-height: 15px; }
.tab.on { background: #f1f2f6; height: 15px; margin-bottom: -1px; }
.gear { width: 12px; height: 12px; margin: 0 0 1px auto; }
.toolrow { background: #eaebef; padding: 0 5px 6px; }
.toolbar { display: flex; width: 748px; height: 25px; align-items: center; }
.tool { flex: 1; display: flex; justify-content: center; align-items: center; min-width: 0; }
.tool svg { width: 22px; height: 22px; }

.body { flex: 1; display: flex; min-height: 0; background: #eaebef; }
.side { width: 52px; display: grid; grid-template-columns: 22px 22px; grid-auto-rows: 1fr; height: 409px; margin-top: 6px; padding-left: 1px; flex: none; }
.center { flex: 1; min-width: 0; display: flex; flex-direction: column; }
.viewport { position: relative; flex: 1; background: #9ba1a9; overflow: hidden; }
.viewname { display: flex; align-items: center; gap: 4px; height: 15px; padding: 0 0 0 6px; background: #86acd0; font-weight: 700; }
.viewname svg { width: 8px; height: 10px; }
.grid { position: absolute; left: 261px; top: 38px; width: 604px; height: 604px; overflow: visible; }
.axes { position: absolute; left: 28px; bottom: 24px; width: 36px; height: 40px; font-size: 11px; overflow: visible; }
.axes text { fill: #686d73; }
.corner { position: absolute; right: 0; top: 0; width: 19px; height: 63px; border: 1px solid #aeb4b9; border-width: 0 0 1px 1px; }
.viewtabs { display: flex; height: 17px; margin-bottom: 4px; }
.viewtabs button { height: 17px; padding: 1px 5px 0; border-right: 1px solid #ccced4; background: #dfe0e3; border-radius: 0 0 3px 8px; white-space: nowrap; }
.viewtabs .on { background: #f5f6f9; padding: 1px 4px 0 7px; }
.viewtabs .add { background: #f0f1f5; }
.add svg { width: 9px; height: 9px; }

.panels { width: 344px; flex: none; padding: 4px 1px 7px 6px; display: flex; flex-direction: column; }
.panel { background: #f6f6f9; border: 1px solid #c6cad8; border-top: 1px solid #d8dbe4; min-height: 0; }
.layers { height: 348px; display: flex; flex-direction: column; background: #fff; margin-bottom: 9px; flex: none; }
.ptabs { display: flex; align-items: flex-end; height: 18px; background: #e5e7ec; border-bottom: 1px solid #ccd0da; padding-right: 1px; flex: none; }
.ptabs button { display: flex; align-items: center; gap: 1px; height: 15px; padding: 0 6px 0 3px; background: #d9dbdf; clip-path: polygon(0 0, calc(100% - 7px) 0, 100% 100%, 0 100%); white-space: nowrap; }
.ptabs button.on { background: #f6f6f9; height: 15px; }
.ptabs button svg { width: 14px; height: 14px; }
.pgear { width: 12px; height: 12px; margin: 0 0 1px auto; }
.ltools { display: flex; height: 20px; background: #f6f6f9; border-bottom: 1px solid #e0e2ea; flex: none; }
.ltools button { width: 20px; display: flex; align-items: center; justify-content: center; }
.ltools svg { width: 15px; height: 15px; }
table { border-collapse: collapse; table-layout: fixed; width: 100%; }
.w-name { width: 64px; }
.w-i { width: 14px; }
.w-m { width: 65px; }
th { height: 19px; padding: 0 0 0 4px; font-weight: 400; text-align: left; border-right: 1px solid #e2e4ea; white-space: nowrap; }
td { height: 15px; padding: 0 0 0 2px; border-top: 1px solid #f3f3f5; white-space: nowrap; line-height: 14px; }
td svg { width: 11px; height: 11px; }
.lname { position: relative; padding-left: 18px; }
.lname.sub { padding-left: 31px; }
.lname .chev { position: absolute; left: 5px; top: 3px; width: 8px; height: 8px; }
.cur { font-weight: 700; }
.swatch { display: block; width: 10px; height: 10px; background: #000; }
.ring { display: block; width: 10px; height: 10px; border: 1px solid #eee; border-radius: 50%; margin-left: 1px; }

.props { flex: 1; display: flex; flex-direction: column; }
.modes { display: flex; gap: 4px; padding: 3px; flex: none; }
.modes button { width: 21px; height: 21px; background: #a9b2b6; border: 1px solid #444; }
.modes .sel { background: #a4cdea; border-color: #3c78a0; }
.modes svg { width: 19px; height: 19px; }
.scroll { flex: 1; display: flex; min-height: 0; padding-left: 3px; border-top: 1px solid #e9eaef; }
.fields { flex: 1; overflow: hidden; border-left: 1px solid #e9eaef; }
h2 { margin: 0; height: 21px; padding-left: 2px; font-size: 11px; font-weight: 400; line-height: 20px; }
.field { display: flex; height: 17px; margin-left: 12px; background: #fff; border-top: 1px solid #e6e7ec; line-height: 16px; }
.field label { width: 144px; padding-left: 5px; border-right: 1px solid #e6e7ec; white-space: nowrap; flex: none; }
.field input, .pick { flex: 1; min-width: 0; padding-left: 4px; }
.dim { color: #777; }
.dim input, .shade input { background: #e9eaee; }
.pick { display: flex; padding-left: 3px; }
.pick select { flex: 1; appearance: none; }
.pick svg { width: 17px; height: 16px; background: #e6e6e6; }
.place { flex: 1; margin: 0 1px 0 2px; background: #e1e1e1; border: 1px solid #adadad; line-height: 12px; }
.bar { width: 12px; margin: 0 3px; background: #f0f0f2; display: flex; flex-direction: column; }
.bar svg { width: 12px; height: 13px; }
.thumb { height: 163px; background: #cdcdcd; margin-bottom: auto; }

.osnap { display: flex; align-items: center; gap: 4px; height: 18px; padding-left: 7px; background: #eaebef; flex: none; }
.osnap label { display: flex; align-items: center; gap: 2px; }
.osnap input { position: relative; appearance: none; width: 11px; height: 11px; border: 1px solid #333; background: #fff; }
.osnap input:checked::before { content: ""; position: absolute; left: 1px; top: 1px; width: 7px; height: 4px; border: solid #222; border-width: 0 0 1px 1px; transform: rotate(-45deg); }
.osnap .soft { gap: 3px; margin-right: 5px; }
.osnap .soft input { border-color: #bbb; background: #e8e8ea; }

.status { display: flex; height: 18px; background: #eaebef; border-top: 1px solid #ccd0da; border-bottom: 2px solid #161616; line-height: 14px; flex: none; }
.status > * { border-right: 1px solid #ccd0da; text-align: center; white-space: nowrap; }
.cp { width: 41px; }
.co { width: 71px; }
.layer { width: 138px; display: flex; align-items: center; gap: 2px; padding-left: 3px; }
.layer i { width: 11px; height: 11px; background: #000; }
.status button { padding: 0 3px; line-height: 14px; }
.status .on { background: #e2eefa; font-weight: 700; }
.status .mem { flex: 1; text-align: left; padding-left: 2px; margin-right: 6px; }

.ink { position: absolute; left: 0; top: 0; width: 100%; height: 100%; pointer-events: none; fill: none; stroke: #c8161c; stroke-width: 1.5px; }
</style>
